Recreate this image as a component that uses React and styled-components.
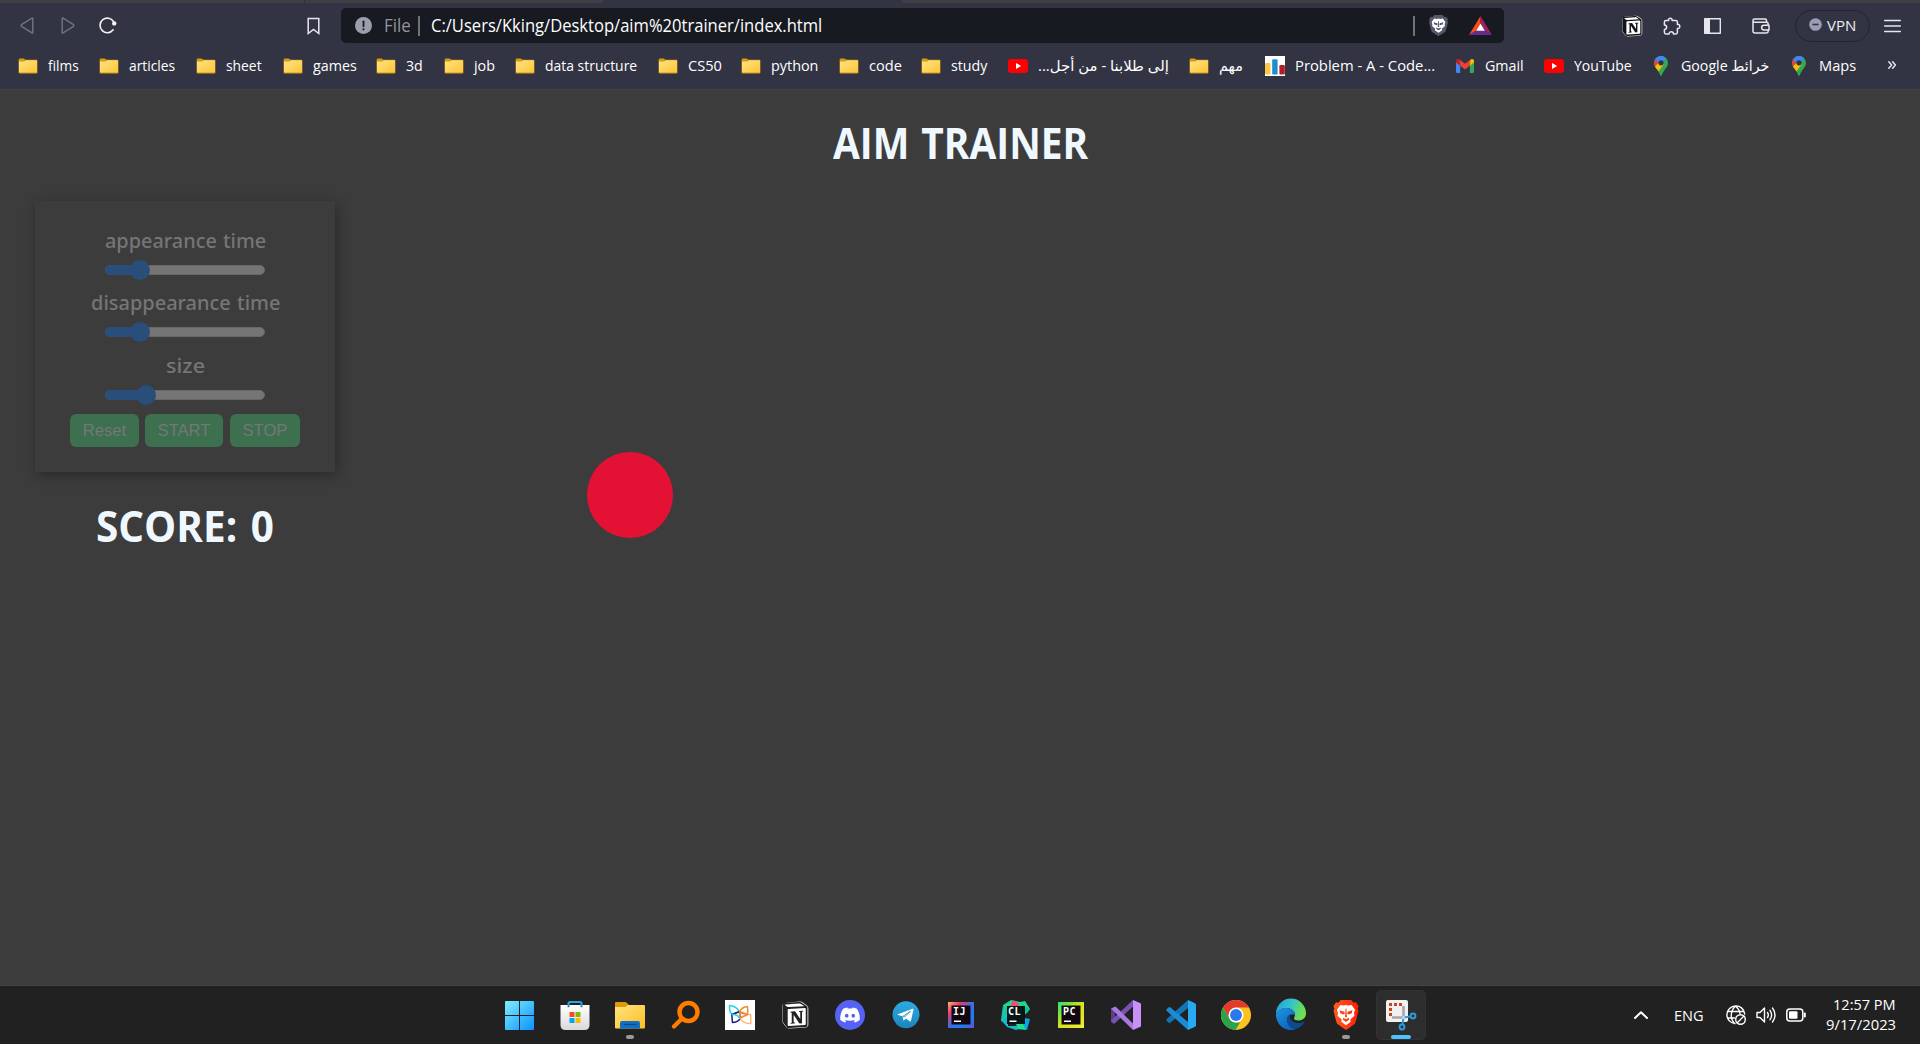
import React, { useLayoutEffect, useRef, useState } from 'react';
import styled, { createGlobalStyle } from 'styled-components';
import { SiNotion, SiDiscord } from 'react-icons/si';

const UI = `"Open Sans", "Noto Sans", "DejaVu Sans", sans-serif`;

const Global = createGlobalStyle`
  *, *::before, *::after { box-sizing: border-box; }
  html, body { margin: 0; padding: 0; background: #3c3c3c; overflow: hidden; }
  svg { display: block; flex: none; overflow: visible; }
`;

/* ---------- text that is condensed to a column width ---------- */
const FitBox = styled.span`
  display: block;
  flex: none;
  width: ${(p) => p.$w}px;
  white-space: nowrap;
  overflow: visible;
`;
const FitInner = styled.span`
  display: inline-block;
  transform-origin: 0 50%;
`;
function Fit({ w, children, rtl }) {
  const ref = useRef(null);
  const [k, setK] = useState(1);
  useLayoutEffect(() => {
    setK(w / ref.current.offsetWidth);
  }, [w, children]);
  return (
    <FitBox $w={w}>
      <FitInner ref={ref} dir={rtl ? 'rtl' : undefined} style={{ transform: `scaleX(${k})` }}>
        {children}
      </FitInner>
    </FitBox>
  );
}

/* ---------- frame ---------- */
const Screen = styled.div`
  width: 1920px;
  height: 1044px;
  display: flex;
  flex-direction: column;
  background: #3c3c3c;
  font-family: ${UI};
`;
const TabStrip = styled.div`
  height: 3px;
  flex: none;
  display: flex;
  background: #3f3e45;
`;
const TabEdge = styled.div`
  width: ${(p) => p.$w}px;
  border-right: ${(p) => (p.$line ? '1px solid #333238' : 'none')};
  background: ${(p) => (p.$active ? '#323443' : 'transparent')};
`;
const Chrome = styled.header`
  height: 87px;
  flex: none;
  background: #323443;
  border-bottom: 1px solid #424247;
`;
const Toolbar = styled.div`
  height: 44px;
  padding: 5px 18px 4px 20px;
  display: flex;
  align-items: center;
`;
const Gap = styled.div`
  width: ${(p) => p.$w}px;
  flex: none;
`;
const Address = styled.div`
  width: 1163px;
  height: 35px;
  padding: 0 12px 0 14px;
  border-radius: 5px;
  background: #171a21;
  display: flex;
  align-items: center;
  color: #fff;
  font-size: 17.5px;
  line-height: 35px;
`;
const Scheme = styled.div`
  color: #94969b;
  margin-left: 12px;
`;
const Divider = styled.div`
  width: 2px;
  height: 20px;
  flex: none;
  background: #717379;
  margin: 0 ${(p) => p.$r}px 0 ${(p) => p.$l}px;
`;
const Vpn = styled.div`
  width: 75px;
  height: 32px;
  padding: 0 0 2px 13px;
  border: 1px solid #222431;
  border-radius: 16px;
  display: flex;
  align-items: center;
  gap: 5px;
  color: #ecedf1;
  font-size: 15px;
  line-height: 20px;
`;
const Bookmarks = styled.nav`
  height: 37px;
  padding-left: 18px;
  display: flex;
  align-items: center;
  color: #fff;
  font-size: 15px;
`;
const Bookmark = styled.div`
  width: ${(p) => p.$w}px;
  flex: none;
  display: flex;
  align-items: center;
  line-height: 20px;
`;
const BookIcon = styled.div`
  width: ${(p) => p.$w}px;
  height: 20px;
  display: flex;
  align-items: center;
  flex: none;
`;
const BookText = styled.div`
  height: 20px;
  margin-top: -2px;
`;

/* ---------- page ---------- */
const Page = styled.main`
  position: relative;
  flex: 1;
  background: #3c3c3c;
  padding: 21px 35px 0;
  color: #f0f8ff;
`;
const Title = styled.h1`
  margin: 0;
  height: 64px;
  display: flex;
  justify-content: center;
  font: 700 43px/64px ${UI};
  word-spacing: 2px;
`;
const Side = styled.section`
  width: 300px;
  margin-top: 26px;
  display: flex;
  flex-direction: column;
  align-items: center;
`;
const Panel = styled.div`
  width: 300px;
  height: 271px;
  padding-top: 25px;
  box-shadow: 2px 3px 12px rgba(0, 0, 0, 0.32);
  display: flex;
  flex-direction: column;
  align-items: center;
`;
const Field = styled.div`
  height: 62.4px;
  display: flex;
  flex-direction: column;
  align-items: center;
`;
const Label = styled.label`
  height: 28px;
  color: #747678;
  font: 500 20.5px/28px "Noto Sans", ${UI};
  word-spacing: 1px;
`;
const Track = styled.div`
  margin-top: 11px;
  width: 160px;
  height: 10px;
  border: 1px solid #686868;
  border-radius: 5px;
  background: #757575;
  display: flex;
  align-items: center;
`;
const Fill = styled.div`
  width: ${(p) => p.$w}px;
  height: 10px;
  margin-left: -1px;
  flex: none;
  border-radius: 5px 0 0 5px;
  background: #2a4e7a;
`;
const Thumb = styled.div`
  width: 20px;
  height: 20px;
  margin-left: -10px;
  flex: none;
  border-radius: 50%;
  background: #2a4e7a;
`;
const Buttons = styled.div`
  display: flex;
  width: 230px;
  gap: 6px;
  padding-top: 1px;
`;
const Button = styled.button`
  width: ${(p) => p.$w}px;
  height: 33px;
  margin-right: ${(p) => p.$mr || 0}px;
  padding: 0;
  border: 0;
  border-radius: 6px;
  background: #3d704f;
  color: #757779;
  display: flex;
  align-items: center;
  justify-content: center;
  font: 16.6px "Liberation Sans", Arial, sans-serif;
`;
const Score = styled.h1`
  margin: 22px 0 0;
  height: 64px;
  font: 700 43px/64px ${UI};
  word-spacing: 3px;
`;
const Target = styled.div`
  position: absolute;
  left: 587px;
  top: 362px;
  width: 86px;
  height: 86px;
  border-radius: 50%;
  background: #e31235;
`;

/* ---------- taskbar ---------- */
const Taskbar = styled.footer`
  height: 59px;
  flex: none;
  display: flex;
  padding-left: 495px;
  background: #212121;
  border-top: 1px solid #454545;
  color: #fff;
`;
const Apps = styled.div`
  display: flex;
  gap: 5.08px;
  padding-top: 4px;
  width: 1139px;
  flex: none;
`;
const AppSlot = styled.div`
  width: 50px;
  height: 50px;
  flex: none;
  padding-top: 9px;
  border-radius: 5px;
  background: ${(p) => (p.$on ? '#2d2d2d' : 'transparent')};
  border: 1px solid ${(p) => (p.$on ? '#333' : 'transparent')};
  display: flex;
  flex-direction: column;
  align-items: center;
  justify-content: space-between;
`;
const Pip = styled.div`
  width: ${(p) => (p.$on ? 20 : 8)}px;
  height: 4px;
  border-radius: 2px;
  background: ${(p) => (p.$on ? '#4cc2ff' : '#9a9a9a')};
`;
const Tray = styled.div`
  display: flex;
  align-items: center;
  height: 57px;
  font-size: 15px;
`;
const Clock = styled.div`
  width: 70px;
  margin-left: 20px;
  display: flex;
  flex-direction: column;
  align-items: flex-end;
  font-size: 15px;
  line-height: 20px;
  padding-bottom: 2px;
`;

/* ---------- small icons ---------- */
const Folder = () => (
  <svg width="20" height="16" viewBox="0 0 20 16">
    <defs>
      <linearGradient id="fo" x1="0" y1="0" x2="1" y2="1">
        <stop offset="0" stopColor="#ffe382" />
        <stop offset="1" stopColor="#fcc63a" />
      </linearGradient>
    </defs>
    <path d="M.6 2Q.6.6 2 .6h3.600L7.600 1.800H18.400q1 0 1 1V14.400q0 1-1 1H1.600q-1 0-1-1z" fill="#d69a13" />
    <path d="M1 3.400h5.400L8 2.300h10.400q.6 0 .6.600v10.900q0 .7-.7.700H1.700q-.7 0-.7-.7z" fill="url(#fo)" />
  </svg>
);
const YT = () => (
  <svg width="20" height="14" viewBox="0 0 20 14">
    <rect width="20" height="14" rx="3.4" fill="#f00" />
    <path d="M8 4l5.200 3L8 10z" fill="#fff" />
  </svg>
);
const Codeforces = () => (
  <svg width="20" height="20" viewBox="0 0 20 20">
    <path fill="#fff" d="M0 0h20v20H0z" />
    <rect x="0" y="7" width="5.400" height="11.500" rx="1.200" fill="#f7c748" />
    <rect x="7.200" y="3.300" width="5.400" height="15.200" rx="1.200" fill="#1f8dce" />
    <rect x="14.400" y="9" width="5.400" height="9.500" rx="1.200" fill="#b11e26" />
  </svg>
);
const Gmail = () => (
  <svg width="18" height="14" viewBox="0 0 18 14">
    <path fill="#4285f4" d="M0 3v9.800Q0 14 1.200 14h3V6z" />
    <path fill="#34a853" d="M18 3v9.800q0 1.200-1.200 1.200h-3V6z" />
    <path fill="#fbbc04" d="M13.800 2.200v4.600L18 3.600V2q0-2-2-2-.9 0-1.500.6z" />
    <path fill="#c5221f" d="M4.200 2.200v4.600L0 3.600V2Q0 0 2 0q.9 0 1.500.6z" />
    <path fill="#ea4335" d="M3.500.6l.7 6.200L9 10.400l4.800-3.600.7-6.200L9 4.800z" />
  </svg>
);
const Pin = () => (
  <svg width="14" height="20" viewBox="0 0 14 20">
    <defs>
      <clipPath id="pin">
        <path d="M7 0a7 7 0 0 1 7 7c0 4.400-4 6-6 11.800Q7 21 6 18.800C4.800 14 0 11.400 0 7a7 7 0 0 1 7-7z" />
      </clipPath>
    </defs>
    <g clipPath="url(#pin)">
      <path fill="#34a853" d="M0 0h14v20H0z" />
      <path fill="#fbbc04" d="M-1 12.500L5 6l5 2-6 8z" />
      <path fill="#ea4335" d="M-1 1L5 6.500-1 12z" />
      <path fill="#4285f4" d="M0 3L5.500 7.500 13 0H3z" />
      <path fill="#4285f4" d="M12.500 2L8 7l-3-3 2-5z" />
    </g>
    <circle cx="7" cy="6.800" r="2.600" fill="#323443" />
  </svg>
);
const NotionMini = ({ size, ink }) => (
  <svg width={size} height={size} viewBox="0 0 24 24">
    <path
      d="M1 4Q1 2 3 1.800L16.500.4q1-.1 2 .6l4 2.800q1 .7 1 2v15q0 1.800-2 2L7 23.700q-1.600 0-2.500-1L1.600 19Q1 18 1 17z"
      fill="#fff"
      stroke="#f2f2f2"
      strokeWidth="1.600"
    />
    <SiNotion size={24} color={ink} />
  </svg>
);
/* Brave lion: shield, white face, features cut in the shield colour */
const Lion = ({ w, h, fill }) => (
  <svg width={w} height={h} viewBox="0 0 24 28" preserveAspectRatio="none">
    <path fill={fill} d="M7 0h10l2.300 2.500L21.500 2.200 24 5.500 23.200 8l.8 2-2.800 10.500q-.5 1.700-2 2.700L13.200 27.400q-1.200.9-2.400 0L4.800 23.200q-1.500-1-2-2.700L0 10l.8-2L0 5.500 2.500 2.200 4.700 2.500z" />
    <path fill="#fff" d="M6.600 4.600L9.800 5.200 12 4.600l2.200.6 3.200-.6 3.300 4.600-1 3 .4 2.500-4 3.600.5 2L12 23.600l-4.600-3.300.5-2-4-3.600.4-2.500-1-3z" />
    <path fill={fill} d="M5.800 9.600l4.600 1.300.5 1.800-1.400.9-3-1.200zM18.200 9.600l-4.600 1.300-.5 1.800 1.400.9 3-1.200zM9.500 16.600L12 18l2.500-1.400.6 1.600L12 20.600l-3.100-2.400zM11.600 8h.8l.5 8h-1.800z" />
  </svg>
);
const Stroke = ({ w = 18, h = 18, vb, c = '#e6e7ee', sw = 1.5, children }) => (
  <svg width={w} height={h} viewBox={vb || `0 0 ${w} ${h}`} fill="none" stroke={c} strokeWidth={sw} strokeLinejoin="round" strokeLinecap="round">
    {children}
  </svg>
);

const folder = (text, w, next) => ({ icon: <Folder />, iw: 30, text, w, next });
const BOOKMARKS = [
  folder('films', 31, 81),
  folder('articles', 46, 97),
  folder('sheet', 36, 87),
  folder('games', 44, 93),
  folder('3d', 17, 68),
  folder('job', 21, 71),
  folder('data structure', 92, 143),
  folder('CS50', 34, 83),
  folder('python', 47, 98),
  folder('code', 33, 82),
  folder('study', 36, 87),
  { icon: <YT />, iw: 30, text: 'إلى طلابنا - من أجل...', w: 131, next: 181, rtl: true },
  { icon: <Folder />, iw: 30, text: 'مهم', w: 24, next: 76, rtl: true },
  { icon: <Codeforces />, iw: 30, text: 'Problem - A - Code...', w: 140, next: 191 },
  { icon: <Gmail />, iw: 29, text: 'Gmail', w: 39, next: 88 },
  { icon: <YT />, iw: 30, text: 'YouTube', w: 58, next: 110 },
  { icon: <Pin />, iw: 27, text: 'Google خرائط', w: 88, next: 138 },
  { icon: <Pin />, iw: 27, text: 'Maps', w: 37, next: 96 },
];

/* ---------- application icons, 30px grid ---------- */
const S = ({ children }) => (
  <svg width="30" height="30" viewBox="0 0 30 30">
    {children}
  </svg>
);
const WindowsIcon = () => (
  <S>
    <defs>
      <linearGradient id="win" x1="0" y1="0" x2="30" y2="30" gradientUnits="userSpaceOnUse">
        <stop offset="0" stopColor="#7df0ff" />
        <stop offset="1" stopColor="#0a8fff" />
      </linearGradient>
    </defs>
    <path fill="url(#win)" d="M0 2Q0 1 1 1h13v14H0zM15 1h13q1 0 1 1v13H15zM0 16h14v14H1q-1 0-1-1zM15 16h14v13q0 1-1 1H15z" />
  </S>
);
const StoreIcon = () => (
  <S>
    <defs>
      <linearGradient id="st" x1="0" y1="0" x2="0" y2="1">
        <stop offset="0" stopColor="#fff" />
        <stop offset="1" stopColor="#d9d9d9" />
      </linearGradient>
    </defs>
    <path d="M8.500 7V3.500Q8.500 2 10 2h10q1.500 0 1.500 1.500V7" fill="none" stroke="#22a7e8" strokeWidth="2" />
    <path fill="url(#st)" d="M.5 5h29v20q0 5-5 5h-19q-5 0-5-5z" />
    <path d="M8.500 5v2.200M21.500 5v2.200" stroke="#1580c0" strokeWidth="1.800" />
    <path fill="#f25022" d="M9.500 12h5v5h-5z" />
    <path fill="#7fba00" d="M15.500 12h5v5h-5z" />
    <path fill="#00a4ef" d="M9.500 18h5v5h-5z" />
    <path fill="#ffb900" d="M15.500 18h5v5h-5z" />
  </S>
);
const ExplorerIcon = () => (
  <S>
    <defs>
      <linearGradient id="ex" x1="0" y1="0" x2="1" y2="1">
        <stop offset="0" stopColor="#ffe480" />
        <stop offset="1" stopColor="#fdbd25" />
      </linearGradient>
    </defs>
    <path fill="#dc9b0c" d="M0 3q0-1 1-1h9q1 0 1.500.6L14 5v5H0z" />
    <path fill="url(#ex)" d="M0 7h10.500L13 5h16q1 0 1 1v21.500q0 1-1 1H1q-1 0-1-1z" />
    <path fill="#1170c0" d="M5 28.500V23q0-2 2-2h16q2 0 2 2v5.500z" />
    <path stroke="#0b4a86" strokeWidth="1.200" d="M8.500 24.500h13" />
  </S>
);
const SearchIcon = () => (
  <S>
    <circle cx="18.500" cy="12" r="9" fill="none" stroke="#ff7e00" strokeWidth="4.400" />
    <path d="M12 18.500L4 26.500" stroke="#ff7e00" strokeWidth="4.200" strokeLinecap="round" />
  </S>
);
const XodoIcon = () => (
  <S>
    <path fill="#fff" d="M0 0h30v30H0z" />
    <g fill="none" strokeWidth="1.500" strokeLinejoin="round">
      <path d="M4.500 5.500Q11 6 14.500 11.500L7 14.500Q4 11 4.500 5.500z" stroke="#25d4e4" />
      <path d="M7 14.500l7.500-3 .5 7.500Q12 22.500 7.500 22.500q-.6-5-.5-8z" stroke="#151a92" />
      <path d="M14.500 11.500Q17 7 22.500 6.500q.6 4 0 8L16 13z" stroke="#f08a35" />
      <path d="M15 18l7.500-3.500h3.200v9Q18 24 15 18z" stroke="#ffb878" />
      <path d="M7 14.500Q13 14 15 19" stroke="#25d4e4" />
      <path d="M14.500 11.500l8 3-7.500 3.500z" stroke="#f08a35" />
    </g>
  </S>
);
const DiscordIcon = () => (
  <S>
    <circle cx="15" cy="15" r="15" fill="#5662f6" />
    <svg x="5.200" y="5.200" width="19.600" height="19.600">
      <SiDiscord size={19.6} color="#fff" />
    </svg>
  </S>
);
const TelegramIcon = () => (
  <S>
    <defs>
      <linearGradient id="tg" x1="0" y1="0" x2="0" y2="1">
        <stop offset="0" stopColor="#2faae3" />
        <stop offset="1" stopColor="#1a86bd" />
      </linearGradient>
    </defs>
    <circle cx="15" cy="14.700" r="13.500" fill="url(#tg)" />
    <path fill="#fff" d="M6.800 14.300L21.600 8.700q1-.2.800 1L20 20.800q-.3 1-1.300.5l-3.800-2.800-2 2q-.5.4-.6-.4l-.6-3.800-4.600-1.400q-1-.3-.3-.6z" />
    <path stroke="#2292cb" strokeWidth=".8" d="M12 16.200l7.500-5-5.800 5.800z" fill="#d7ebf6" />
  </S>
);
const Glyphs = ({ children }) => (
  <text x="7" y="15" fill="#fff" fontFamily="DejaVu Sans Mono, monospace" fontWeight="700" fontSize="10" textLength="12.500">
    {children}
  </text>
);
const JetBox = ({ id, stops, text }) => (
  <S>
    <defs>
      <linearGradient id={id} x1="0" y1="0" x2="1" y2="1">
        {stops.map((c, i) => (
          <stop key={c + i} offset={i / (stops.length - 1)} stopColor={c} />
        ))}
      </linearGradient>
    </defs>
    <path fill={`url(#${id})`} d="M2 2h26v26H2z" />
    <path fill="#120812" d="M5.500 5.500h19v19h-19z" />
    <Glyphs>{text}</Glyphs>
    <path fill="#fff" d="M8 20.500h7v1.500H8z" />
  </S>
);
const ClionIcon = () => (
  <S>
    <path fill="#21d789" d="M2 5l8-5 9 2 5-1 5 8-3 4-9 6z" />
    <path fill="#ef4a81" d="M12 0l6 4v3H9z" />
    <path fill="#19c7a5" d="M2 5l5 2v10l-6 5-1-2z" />
    <path fill="#17b9d0" d="M0 20l7-4v10l9 0 2 3-3 1-9-3z" />
    <path fill="#0aa6e0" d="M24 18l5 1-3 11-7-3z" />
    <path fill="#1fe08e" d="M15 24h7l3 6-8-1z" />
    <path fill="#0fbf9b" d="M21 4l7 5-4 5z" />
    <path fill="#071716" d="M6 6h18v18H6z" />
    <Glyphs>CL</Glyphs>
    <path fill="#fff" d="M8.500 20.500h7v1.500h-7z" />
  </S>
);
const VisualStudioIcon = () => (
  <S>
    <path fill="#5e3d8c" d="M0 8.500L4 7v16l-4-2z" />
    <path fill="#7a52b3" d="M3 24L22 6.500V0L0 20.500v1z" />
    <path fill="#a57be0" d="M0 8.500L4.500 6.500 22 23.500V30z" />
    <path fill="#c792f7" d="M22 0l8 3.500v23L22 30z" />
  </S>
);
const CodeIcon = () => (
  <S>
    <path fill="#1573b5" d="M22 0v8L4.500 22.500q-1 .8-2 0L.8 21q-1-1 0-2z" />
    <path fill="#1b8bd3" d="M22 30v-8L4.500 7.500q-1-.8-2 0L.8 9q-1 1 0 2z" />
    <path fill="#29a9f2" d="M22 0l7 3.200q1 .5 1 1.600v20.400q0 1.100-1 1.600L22 30z" />
  </S>
);
const ChromeIcon = () => (
  <S>
    <circle cx="15" cy="15" r="15" fill="#fcc31e" />
    <path fill="#e33b2e" d="M2 7.500A15 15 0 0 1 28 7.500H15L8.500 18.700z" />
    <path fill="#2ba24c" d="M2 7.500L8.500 18.700Q11 22.500 15 22.500h4L14.500 30A15 15 0 0 1 2 7.500z" />
    <circle cx="15" cy="15" r="7.500" fill="#fff" />
    <circle cx="15" cy="15" r="5.900" fill="#2a78ee" />
  </S>
);
const EdgeIcon = () => (
  <S>
    <defs>
      <linearGradient id="e1" x1="0" y1="0" x2="1" y2=".3">
        <stop offset="0" stopColor="#1fa0dd" />
        <stop offset=".55" stopColor="#35c4c7" />
        <stop offset="1" stopColor="#6fe04d" />
      </linearGradient>
      <linearGradient id="e2" x1="0" y1="0" x2=".6" y2="1">
        <stop offset="0" stopColor="#1d97dd" />
        <stop offset="1" stopColor="#0d65c2" />
      </linearGradient>
    </defs>
    <path fill="url(#e1)" d="M0 13.500A15 15 0 0 1 30 13.500C30 18 26.500 20.500 22.500 20.500c-3 0-4.500-1-4.500-2.300 0-.8 1-1.500 1-3.700C19 11 15 8 10.500 8 5.500 8 1.500 10.500 0 13.500z" />
    <path fill="url(#e2)" d="M0 14C1 10.500 5 8 10.500 8 15 8 19 11 19 14.500h-4.500Q11 16 11 19.500 11.500 26 19 29.400 16 30.200 13 29.900A15 15 0 0 1 0 14z" />
    <path fill="#104a8e" d="M13.500 14.800Q10.500 17 11 20.500 12 27.500 18.500 29.500 25 28 28.300 22.500q.2-.8-.6-.5Q25 23.400 21 23 14 22 13.500 14.800z" />
  </S>
);
const BraveIcon = () => (
  <S>
    <defs>
      <linearGradient id="br" x1="0" y1="0" x2="24" y2="0" gradientUnits="userSpaceOnUse">
        <stop offset="0" stopColor="#ff5a1f" />
        <stop offset="1" stopColor="#ff2005" />
      </linearGradient>
    </defs>
    <svg x="2.500" y="0" width="25" height="30">
      <Lion w={25} h={30} fill="url(#br)" />
    </svg>
  </S>
);
const SnipIcon = () => (
  <S>
    <rect x="0" y="0" width="22" height="22" rx="2" fill="#f1f1f4" />
    <path fill="#d04210" d="M3 3h3v3H3zM8 3h3v3H8zM13 3h3v3h-3zM3 8h3v3H3zM3 13h3v3H3z" />
    <path d="M17.500 6v12.500M6 17.500h13" stroke="#a3a8ae" strokeWidth="2.600" />
    <path d="M18 17.500l6-1M17.500 18l-1 6" stroke="#2b9be0" strokeWidth="2" />
    <circle cx="17.500" cy="17.500" r="1.500" fill="#d5d9dd" />
    <circle cx="27" cy="16" r="2.400" fill="none" stroke="#2b9be0" strokeWidth="2" />
    <circle cx="16" cy="27" r="2.400" fill="none" stroke="#2b9be0" strokeWidth="2" />
  </S>
);

const APPS = [
  { icon: <WindowsIcon /> },
  { icon: <StoreIcon /> },
  { icon: <ExplorerIcon />, open: true },
  { icon: <SearchIcon /> },
  { icon: <XodoIcon /> },
  { icon: <S><svg x="2" y="2" width="26" height="26"><NotionMini size={26} ink="#222" /></svg></S> },
  { icon: <DiscordIcon /> },
  { icon: <TelegramIcon /> },
  { icon: <JetBox id="ij" text="IJ" stops={['#ffb36b', '#f0386b', '#3b6fe8', '#1d7df2', '#6a4fd0']} /> },
  { icon: <ClionIcon /> },
  { icon: <JetBox id="pc" text="PC" stops={['#21e37f', '#7de336', '#d8e41c', '#e2e52a', '#eef03a']} /> },
  { icon: <VisualStudioIcon /> },
  { icon: <CodeIcon /> },
  { icon: <ChromeIcon /> },
  { icon: <EdgeIcon /> },
  { icon: <BraveIcon />, open: true },
  { icon: <SnipIcon />, on: true },
];

const FIELDS = [
  { text: 'appearance time', w: 161, fill: 35 },
  { text: 'disappearance time', w: 189, fill: 35 },
  { text: 'size', w: 39, fill: 41 },
];

export default function App() {
  return (
    <Screen>
      <Global />
      <TabStrip>
        <TabEdge $w={305} $line />
        <TabEdge $w={298} />
        <TabEdge $w={299} $active />
      </TabStrip>
      <Chrome>
        <Toolbar>
          <Stroke w={14} h={17} c="#6f7180">
            <path d="M12.800 1.500v14q0 .8-.8.400L1.500 9.300q-.9-.8 0-1.600L12 1.100q.8-.4.800.4z" />
          </Stroke>
          <Gap $w={27} />
          <Stroke w={14} h={17} c="#6f7180">
            <path d="M1.200 1.500v14q0 .8.800.4L12.500 9.300q.9-.8 0-1.600L2 1.100q-.8-.4-.8.400z" />
          </Stroke>
          <Gap $w={24} />
          <Stroke w={17} h={17} sw={1.6} c="#f2f2f5">
            <path d="M14.200 12.800A7.300 7.300 0 1 1 14.600 4.600" />
            <circle cx="15.200" cy="6.400" r="2.200" fill="#f2f2f5" stroke="none" />
          </Stroke>
          <Gap $w={191} />
          <Stroke w={13} h={18}>
            <path d="M1.200 1.500h10.600v15L6.500 12.500l-5.300 4z" strokeLinejoin="miter" />
          </Stroke>
          <Gap $w={21} />
          <Address>
            <svg width="17" height="17" viewBox="0 0 17 17">
              <circle cx="8.500" cy="8.500" r="8.500" fill="#9c9fab" />
              <path d="M8.500 4.300v5" stroke="#171a21" strokeWidth="1.800" strokeLinecap="round" />
              <circle cx="8.500" cy="12.300" r="1.100" fill="#171a21" />
            </svg>
            <Scheme>
              <Fit w={27}>File</Fit>
            </Scheme>
            <Divider $l={7} $r={11} />
            <Fit w={391}>C:/Users/Kking/Desktop/aim%20trainer/index.html</Fit>
            <Gap $w={582} />
            <Divider $l={9} $r={14} />
            <Lion w={19} h={21} fill="#55586c" />
            <Gap $w={21} />
            <svg width="23" height="19" viewBox="0 0 23 19">
              <path fill="#ff4a1c" d="M11.500 0L0 19l7.600-4.600L11.500 8z" />
              <path fill="#9e1f63" d="M11.500 0L23 19l-7.600-4.600L11.500 8z" />
              <path fill="#662d91" d="M0 19h23l-7.600-4.600H7.600z" />
              <path fill="#fff" d="M11.500 7.500l4.300 7.300H7.200z" />
            </svg>
          </Address>
          <Gap $w={118} />
          <NotionMini size={20} ink="#14151b" />
          <Gap $w={20} />
          <Stroke w={19} h={18}>
            <path d="M4 3.500h2.600C5.800.4 10.800.4 10 3.500h3.800q1.600 0 1.600 1.600v2.300c3.200-.6 3.200 4.600 0 4v3.900q0 1.600-1.600 1.600h-2.300c0-3-4.400-3-4.400 0H4q-1.600 0-1.600-1.600v-2.800c3-.2 3-4.200 0-4.400V5.100Q2.400 3.500 4 3.500z" />
          </Stroke>
          <Gap $w={23} />
          <Stroke w={17} h={16} sw={1.4}>
            <path d="M.7.7h15.600v14.600H.7z" />
            <path d="M1 1h5v14H1z" fill="#e6e7ee" stroke="none" />
          </Stroke>
          <Gap $w={31} />
          <Stroke w={18} h={16} sw={1.5}>
            <path d="M14.500 4V2.500Q14.500 1 13 1H2.500Q1 1 1 2.500v10.500Q1 15 3 15h11.500q1.700 0 1.700-1.700V6q0-1.700-1.700-1.700H2.500Q1 4.200 1 2.800" />
            <path d="M17 7.200h-5a2.300 2.300 0 0 0 0 4.800h5z" fill="#323443" />
          </Stroke>
          <Gap $w={25} />
          <Vpn>
            <svg width="13" height="13" viewBox="0 0 13 13">
              <circle cx="6.500" cy="6.500" r="6.300" fill="#9a9db3" />
              <path d="M3.400 6.500h6.200" stroke="#323443" strokeWidth="1.600" />
            </svg>
            <Fit w={29}>VPN</Fit>
          </Vpn>
          <Gap $w={14} />
          <Stroke w={17} h={14} sw={1.5}>
            <path d="M.7 1.500h15.600M.7 7h15.600M.7 12.500h15.600" />
          </Stroke>
        </Toolbar>
        <Bookmarks>
          {BOOKMARKS.map((b, i) => (
            <Bookmark key={i} $w={b.next}>
              <BookIcon $w={b.iw}>{b.icon}</BookIcon>
              <BookText>
                <Fit w={b.w} rtl={b.rtl}>
                  {b.text}
                </Fit>
              </BookText>
            </Bookmark>
          ))}
          <Stroke w={8} h={10} sw={1.5}>
            <path d="M.8.8L3.600 4 .8 7.200M4.600.8L7.400 4 4.600 7.200" />
          </Stroke>
        </Bookmarks>
      </Chrome>

      <Page>
        <Title>
          <Fit w={255}>AIM TRAINER</Fit>
        </Title>
        <Side>
          <Panel>
            {FIELDS.map((f) => (
              <Field key={f.text}>
                <Label>
                  <Fit w={f.w}>{f.text}</Fit>
                </Label>
                <Track>
                  <Fill $w={f.fill} />
                  <Thumb />
                </Track>
              </Field>
            ))}
            <Buttons>
              <Button $w={69}>Reset</Button>
              <Button $w={78} $mr={1}>START</Button>
              <Button $w={70}>STOP</Button>
            </Buttons>
          </Panel>
          <Score>
            <Fit w={178}>SCORE: 0</Fit>
          </Score>
        </Side>
        <Target />
      </Page>

      <Taskbar>
        <Apps>
          {APPS.map((a, i) => (
            <AppSlot key={i} $on={a.on}>
              {a.icon}
              {(a.on || a.open) && <Pip $on={a.on} />}
            </AppSlot>
          ))}
        </Apps>
        <Tray>
          <Stroke w={14} h={8} sw={2} c="#fff">
            <path d="M1 7l6-5.800L13 7" />
          </Stroke>
          <Gap $w={26} />
          <Fit w={30}>ENG</Fit>
          <Gap $w={22} />
          <Stroke w={20} h={20} sw={1.4} c="#fff">
            <path d="M9 18.600A8.900 8.900 0 1 1 18.700 9M8.600 18.400C4 14 4 6 9.600.9 13 4 13.800 6.500 14 8.500M1.500 6.500h16.500M1.500 13h7" />
            <circle cx="14.500" cy="14.500" r="4.800" />
            <path d="M11.300 17.700l6.400-6.400" />
          </Stroke>
          <Gap $w={10} />
          <Stroke w={20} h={18} sw={1.4} c="#fff">
            <path d="M1 6.500h3L8.500 2v14L4 11.500H1zM11.500 6.500q1.600 2.500 0 5M14 4.300q3.200 4.700 0 9.400M16.500 2q5 7 0 14" />
          </Stroke>
          <Gap $w={10} />
          <Stroke w={20} h={14} sw={1.5} c="#fff">
            <rect x=".8" y="1" width="16" height="12" rx="3" />
            <rect x="3" y="3.200" width="8.500" height="7.600" rx="1" fill="#fff" stroke="none" />
            <path d="M18.800 5.500v3" strokeWidth="2" />
          </Stroke>
          <Clock>
            <Fit w={63}>12:57 PM</Fit>
            <Fit w={70}>9/17/2023</Fit>
          </Clock>
        </Tray>
      </Taskbar>
    </Screen>
  );
}
